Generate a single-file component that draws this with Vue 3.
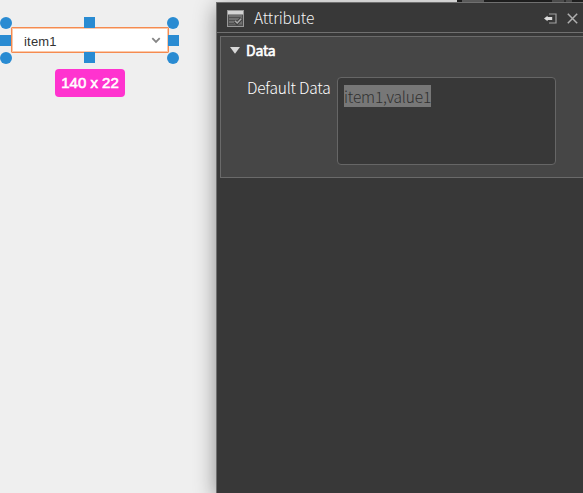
<script setup>
import { ref } from 'vue'

const handles = ['nw', 'n', 'ne', 'w', 'e', 'sw', 's', 'se']
const data = ref('item1,value1')
</script>

<template>
  <div class="editor">
    <main class="canvas">
      <div class="widget">
        <div class="select">
          <span>item1</span>
          <svg class="chevron" viewBox="0 0 10 7" width="10" height="7">
            <path d="M1.3 1.2 5 4.9 8.7 1.2" fill="none" stroke="#858585" stroke-width="1.8" />
          </svg>
        </div>
        <i v-for="h in handles" :key="h" class="handle" :class="h"></i>
      </div>
      <div class="size">140 x 22</div>
    </main>
    <aside class="side">
      <div class="toolbar">
        <i class="tb-light"></i><i class="tb-gap"></i><i class="tb-tab"></i><i class="tb-space"></i><i class="tb-tab half"></i><i class="tb-div"></i><i class="tb-end"></i>
      </div>
      <section class="panel">
        <header class="title">
          <svg class="form-icon" width="17" height="17" viewBox="0 0 17 17">
            <rect x=".5" y=".5" width="16" height="16" fill="#505050" stroke="#999" />
            <rect x="1" y="1" width="15" height="3.5" fill="#d4d4d4" />
            <rect x="2" y="5" width="13" height="9.5" fill="#707070" />
            <path d="M2 7.5h11M2 10.5h6M2 13.5h5" stroke="#505050" />
            <path d="M8 11.2l2 2.1 4.5-4.8" fill="none" stroke="#404040" stroke-width="3.5" />
            <path d="M8.2 11l2 2 4-4.3" fill="none" stroke="#aaa" stroke-width="1.5" />
          </svg>
          <h1>Attribute</h1>
          <svg class="dock" width="13" height="11" viewBox="0 0 13 11">
            <path d="M5 1h7v9H5" fill="none" stroke="#a0a0a0" stroke-width="1.2" />
            <path d="M0 5.5 3.6 2.8v1.1h4.6v3.2H3.6v1.1z" fill="#dcdcdc" />
          </svg>
          <svg class="close" width="11" height="11" viewBox="0 0 11 11">
            <path d="M.8.8l9.4 9.4M10.2.8.8 10.2" stroke="#b0b0b0" stroke-width="1.5" />
          </svg>
        </header>
        <div class="group">
          <div class="group-title">
            <svg width="10" height="7" viewBox="0 0 10 7"><path d="M0 0h10L5 6.8z" fill="#d8d8d8" /></svg>
            <h2>Data</h2>
          </div>
          <div class="field">
            <label>Default Data</label>
            <div class="box"><mark>{{ data }}</mark></div>
          </div>
        </div>
      </section>
    </aside>
  </div>
</template>

<style>
body { overflow: hidden; }
</style>

<style scoped>
* { box-sizing: border-box; }
.editor {
  display: flex;
  width: 583px;
  height: 493px;
  overflow: hidden;
  background: #efefef;
  font-family: "Noto Sans CJK SC", "Noto Sans", sans-serif;
}
.canvas { width: 216px; flex: none; padding-top: 27px; }
.widget { position: relative; width: 158px; height: 26px; margin-left: 11px; }
.select {
  display: flex;
  align-items: center;
  justify-content: space-between;
  height: 26px;
  padding: 4px 7px 0 12px;
  background: #fff;
  border: 1px solid #f58b50;
  box-shadow: inset 0 0 0 1px #fbc9aa;
  border-radius: 1px;
  font: 13px/20px "Liberation Sans", sans-serif;
  letter-spacing: .2px;
  color: #333;
}
.chevron { margin-top: -4px; }
.handle { position: absolute; width: 11px; height: 11px; background: #298bd2; }
.nw, .ne, .sw, .se { width: 12px; height: 12px; border-radius: 50%; }
.nw { left: -11.5px; top: -10.5px; }
.ne { left: 156px; top: -10.5px; }
.sw { left: -11.5px; top: 24.5px; }
.se { left: 156px; top: 24.5px; }
.n { left: 72.5px; top: -10px; }
.s { left: 72.5px; top: 25px; }
.w { left: -11px; top: 7.5px; }
.e { left: 156.5px; top: 7.5px; }
.size {
  width: 70px;
  height: 28px;
  margin: 16px 0 0 55px;
  border-radius: 4px;
  background: #ff33cf;
  color: #fff;
  text-align: center;
  font: 400 15px/28px "Liberation Sans", sans-serif;
  -webkit-text-stroke: .6px #fff;
}
.side { flex: 1; min-width: 0; display: flex; flex-direction: column; }
.toolbar { display: flex; height: 2px; flex: none; background: #222; }
.tb-light { width: 241px; background: #efefef; }
.tb-gap { width: 5px; background: #202020; }
.tb-tab { width: 22px; background: #666; }
.tb-space { width: 68px; }
.half { width: 12px; background: #555; }
.tb-div { width: 2px; background: #333; }
.tb-end { width: 6px; background: #555; }
.panel {
  flex: 1;
  background: #383838;
  border: solid #707070;
  border-width: 1px 0 0 1px;
  box-shadow: 0 5px 20px rgba(0, 0, 0, .42);
}
.title {
  display: flex;
  align-items: center;
  height: 30px;
  padding: 0 5px 0 10px;
  border-bottom: 1px solid #707070;
}
.form-icon { margin-top: 1px; }
h1 {
  margin: -2px auto 0 10px;
  font-size: 15.5px;
  line-height: 24px;
  font-weight: 300;
  letter-spacing: -.1px;
  color: #f4f4f4;
}
.close { margin-left: 10px; }
.dock, .close { margin-top: 2px; }
.group {
  height: 142px;
  margin: 3px 0 0 3px;
  background: #464646;
  border: solid #6a6a6a;
  border-width: 1px 0 1px 1px;
}
.group-title { display: flex; align-items: center; height: 28px; padding-left: 9px; }
.group-title svg { margin-top: -2px; }
h2 {
  margin: -2px 0 0 6px;
  font-size: 14px;
  line-height: 22px;
  font-weight: 400;
  letter-spacing: -.2px;
  color: #fff;
  -webkit-text-stroke: .6px #fff;
}
.field { display: flex; padding: 12px 0 0 26px; }
label {
  width: 90px;
  margin-top: -2px;
  line-height: 24px;
  font-size: 15.5px;
  font-weight: 300;
  letter-spacing: -.2px;
  color: #fff;
}
.box {
  width: 219px;
  height: 88px;
  padding: 7px 6px;
  border: 1px solid #666;
  border-radius: 4px;
  background: #383838;
  font-size: 15.5px;
  line-height: 22px;
  font-weight: 300;
  letter-spacing: -.16px;
}
mark { display: inline-block; height: 22px; background: #777; color: #303030; }
</style>
